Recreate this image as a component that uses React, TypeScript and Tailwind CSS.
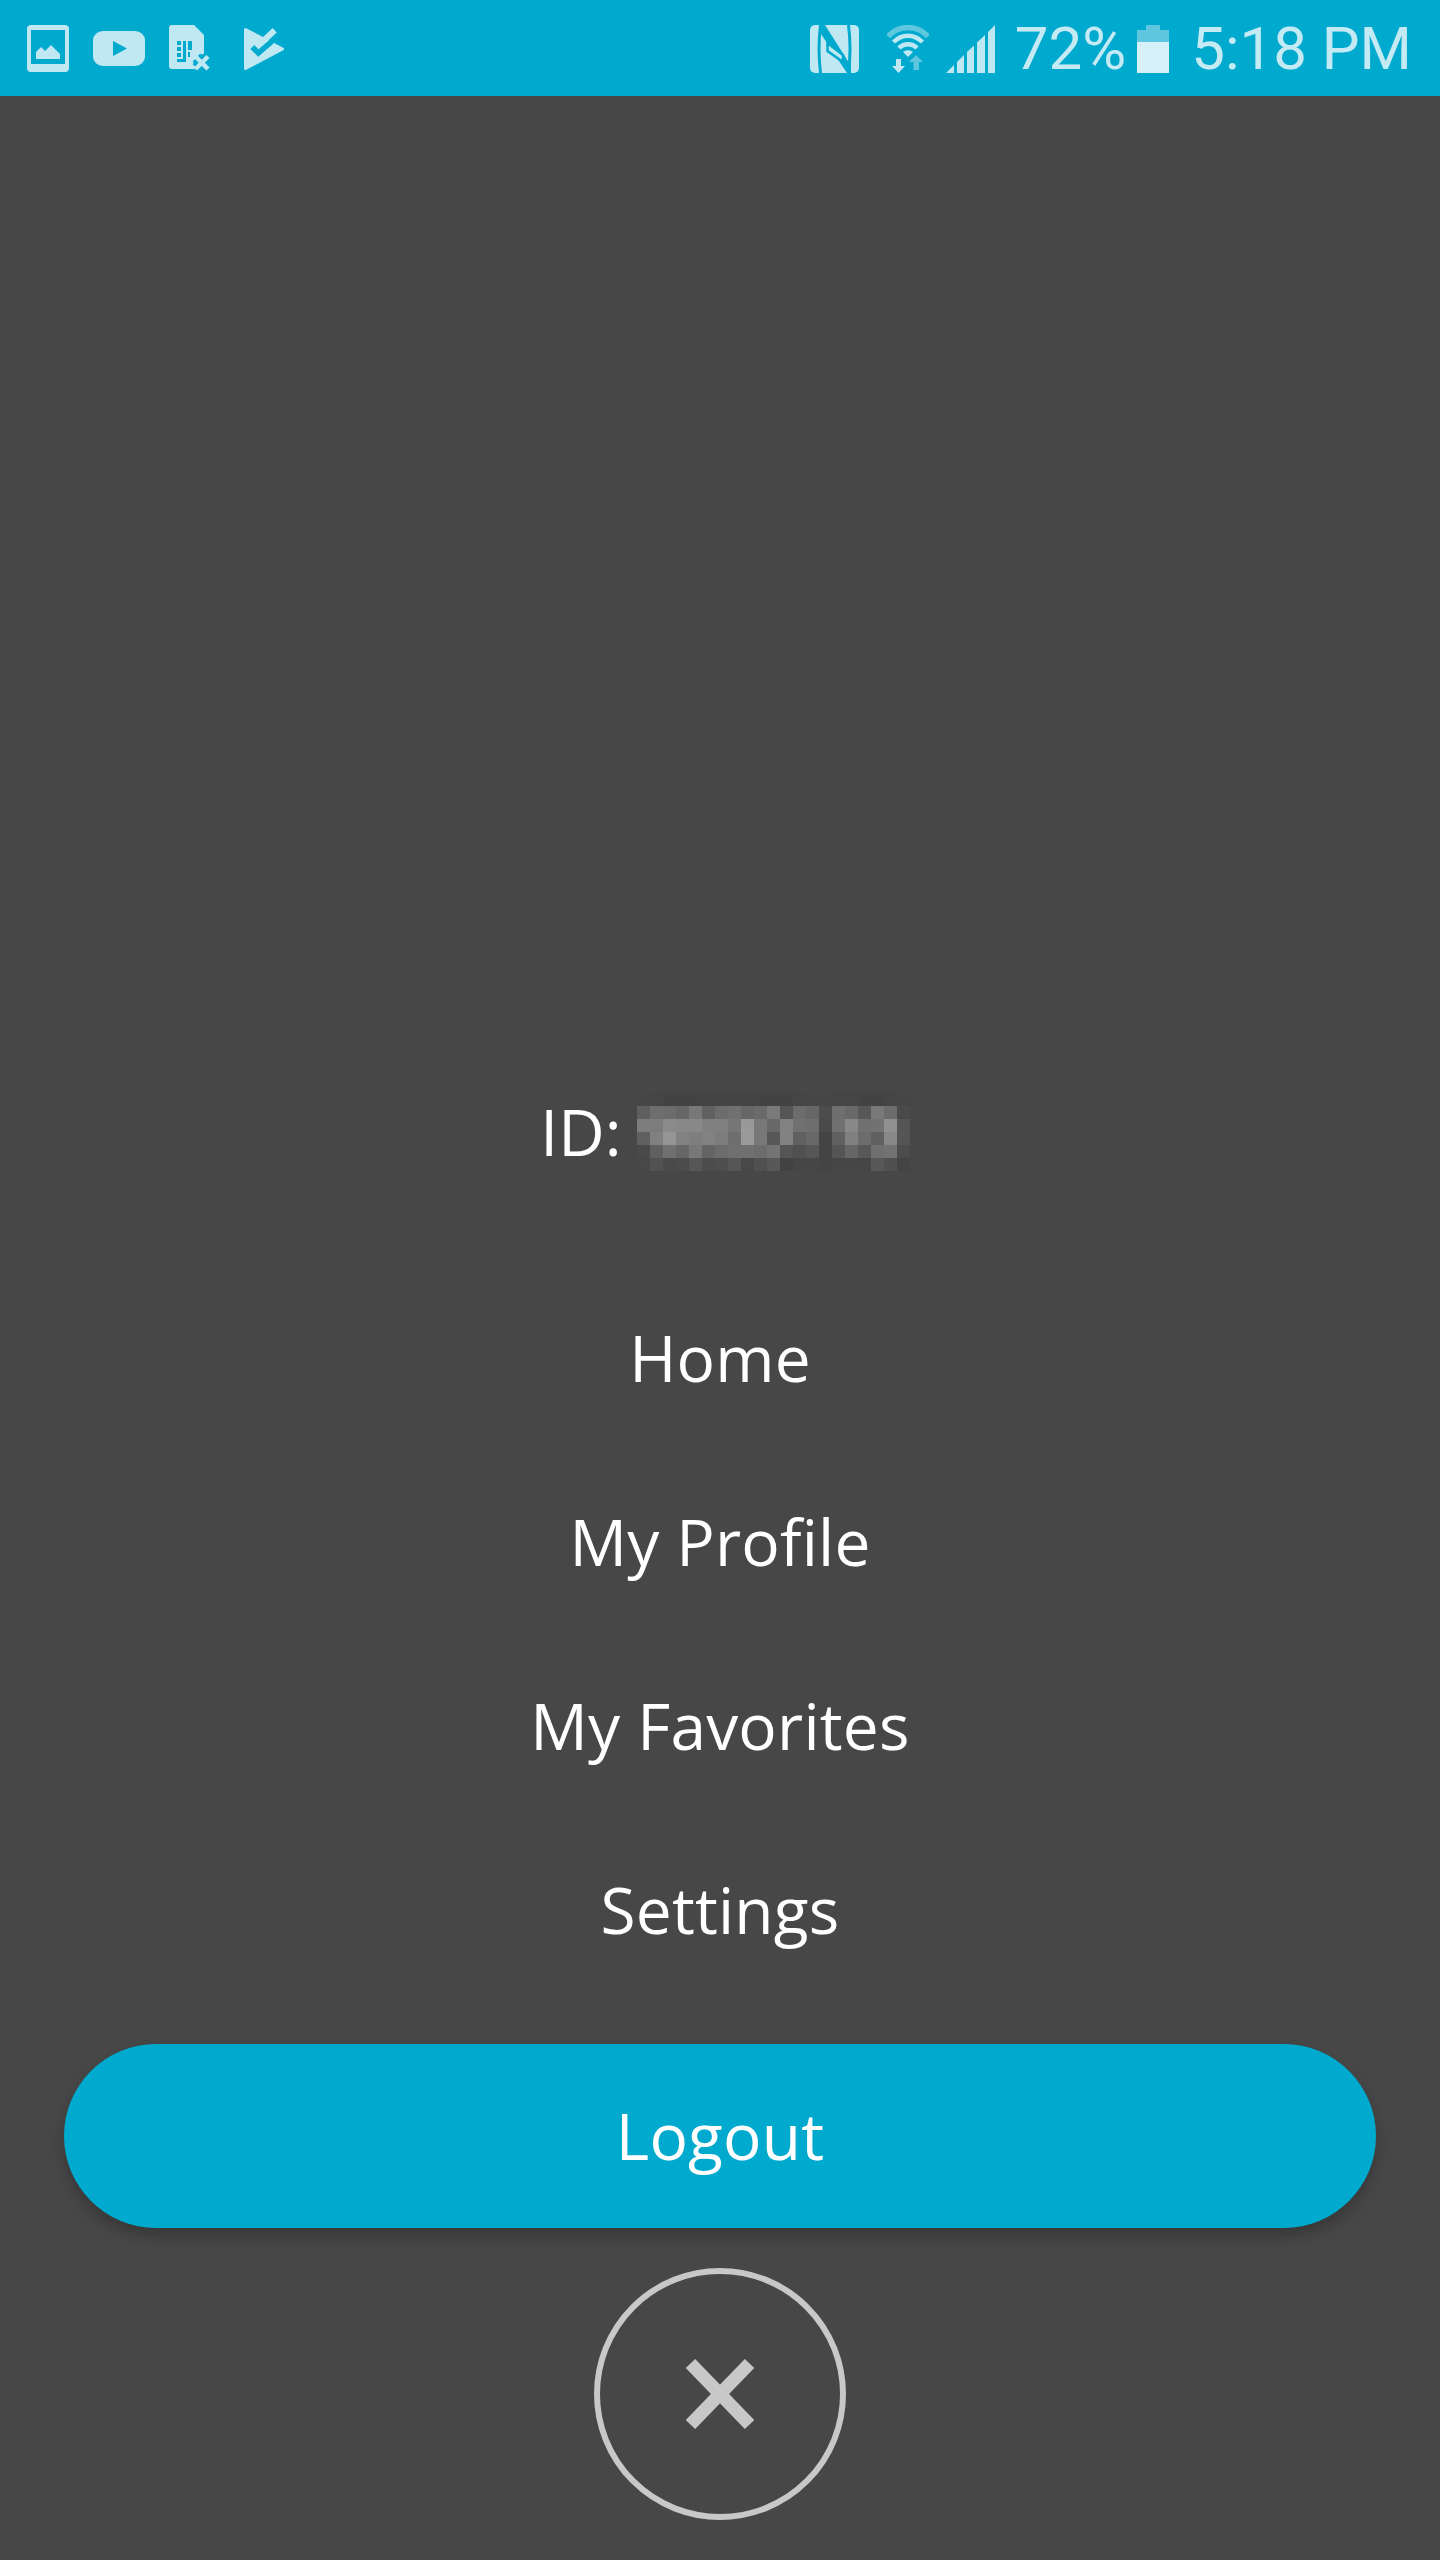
const L = "#bfe8f3";
const T = "#00a9ce";
const D = "#5fc6df";

const mosaic: string[][] = [
  ["46","45","43","43","43","44","44","44","44","43","43","43","45","46","46","45","45","43","43","45","46"],
  ["5f","6e","6c","66","78","60","6c","70","66","6a","7a","55","6c","66","4c","6e","68","58","78","6c","4a"],
  ["7d","7c","8b","88","88","80","80","76","99","78","68","82","70","6e","4a","70","88","70","72","90","55"],
  ["60","80","95","82","7e","82","7c","6e","9a","78","58","82","60","68","44","60","80","6c","60","88","55"],
  ["4a","60","70","66","78","64","6c","70","70","6c","74","55","50","56","44","55","66","58","70","72","4c"],
  ["48","52","4a","4c","56","4c","4e","56","48","50","58","42","46","46","44","46","46","46","58","50","44"],
];

function ImageIcon() {
  return (
    <svg width="42" height="47" viewBox="0 0 42 47" className="ml-px">
      <path fillRule="evenodd" fill={L} d="M4 0H38a4 4 0 0 1 4 4V43a4 4 0 0 1-4 4H4a4 4 0 0 1-4-4V4a4 4 0 0 1 4-4ZM4 5V39H38V5Z" />
      <path fill={L} d="M9 34V27L14 22L18 26L24 20L33 29V34Z" />
    </svg>
  );
}

function YoutubeIcon() {
  return (
    <svg width="52" height="36" viewBox="0 0 52 36">
      <path fillRule="evenodd" fill={L} d="M10 0H42a10 9 0 0 1 10 9V26a10 9 0 0 1-10 9H10a10 9 0 0 1-10-9V9a10 9 0 0 1 10-9ZM20 10V25L34 17.5Z" />
    </svg>
  );
}

function SimIcon() {
  return (
    <svg width="42" height="47" viewBox="0 0 42 47">
      <path fill={L} d="M3 0H25L35 10V41a3 3 0 0 1-3 3H3a3 3 0 0 1-3-3V3a3 3 0 0 1 3-3Z" />
      <g fill={T}>
        <rect x="8" y="16" width="4" height="4" />
        <rect x="8" y="22" width="4" height="4" />
        <rect x="8" y="28" width="4" height="4" />
        <rect x="8" y="34" width="9" height="3" />
        <rect x="14" y="16" width="3" height="18" />
        <rect x="19" y="16" width="4" height="9" />
        <rect x="19" y="27" width="2" height="5" />
      </g>
      <path d="M27.5 32.5L38 43M38 32.5L27.5 43" stroke={T} strokeWidth="11" />
      <path d="M26.5 31.5L39 44M39 31.5L26.5 44" stroke={L} strokeWidth="4.5" />
    </svg>
  );
}

function PlayCheckIcon() {
  return (
    <svg width="40" height="42" viewBox="0 0 40 42">
      <path fill={L} stroke={L} strokeWidth="3" strokeLinejoin="round" d="M1.5 1.5L38.5 21L1.5 40.5Z" />
      <path d="M18.3 14L30.7 2.3" fill="none" stroke={L} strokeWidth="6" />
      <path d="M8.3 19L14.3 25L28.3 13" fill="none" stroke={T} strokeWidth="5.5" />
    </svg>
  );
}

function NfcIcon() {
  return (
    <svg width="49" height="48" viewBox="0 0 49 48">
      <rect width="49" height="48" rx="5" fill={L} />
      <path d="M9 0C7 16 7 32 9 48H12C10 32 10 16 12 0Z" fill={T} />
      <path d="M40 0C42 16 42 32 40 48H37C39 32 39 16 37 0Z" fill={T} />
      <path d="M10 0H15L41 41V48H37L11 9Z" fill={T} />
      <path d="M17.5 18V26L33 37V30Z" fill={L} stroke={T} strokeWidth="2.5" />
    </svg>
  );
}

function WifiIcon() {
  return (
    <svg width="42" height="48" viewBox="0 0 42 48">
      <path d="M1 11.5C12 -0.5 30 -0.5 41 11.5" fill="none" stroke={D} strokeWidth="5.5" />
      <path d="M6.5 17C15 8.5 27 8.5 35.5 17" fill="none" stroke={L} strokeWidth="4.5" />
      <path d="M12 23C17 18 25 18 30 23" fill="none" stroke={L} strokeWidth="4.5" />
      <path d="M16 27C19 24.5 23 24.5 26 27L21 32Z" fill={L} />
      <path fill={L} d="M9 34H14V41H18L11.5 48L5 41H9Z" />
      <path fill={D} d="M26.5 45H32V37H36L29 30L22 37H26.5Z" />
    </svg>
  );
}

function SignalIcon() {
  return (
    <svg width="49" height="48" viewBox="0 0 49 48" fill={L}>
      <polygon points="0,48 8,40 8,48" />
      <polygon points="11,37 18,30 18,48 11,48" />
      <polygon points="21,27 28,20.5 28,48 21,48" />
      <polygon points="31,17.6 39,10 39,48 31,48" />
      <polygon points="42,7 49,0 49,48 42,48" />
    </svg>
  );
}

function BatteryIcon() {
  return (
    <svg width="32" height="48" viewBox="0 0 32 48">
      <path fill={D} d="M9 0H23V5H32V17H0V5H9Z" />
      <rect y="17" width="32" height="31" fill="#d6f1f8" />
    </svg>
  );
}

function CloseIcon() {
  return (
    <svg width="68" height="70" viewBox="0 0 68 70">
      <path d="M4.5 4.5L63.5 65.5M63.5 4.5L4.5 65.5" stroke="#c8c8c8" strokeWidth="13" />
    </svg>
  );
}

function Censored() {
  return (
    <svg width="273" height="78" viewBox="0 0 273 78" shapeRendering="crispEdges">
      {mosaic.map((row, r) =>
        row.map((c, i) => <rect key={`${r}-${i}`} x={i * 13} y={r * 13} width="13" height="13" fill={`#${c}${c}${c}`} />)
      )}
    </svg>
  );
}

const items = ["Home", "My Profile", "My Favorites", "Settings"];

export default function App() {
  return (
    <div className="flex h-[2560px] w-[1440px] flex-col bg-[#474747] font-['Open_Sans',sans-serif] text-white">
      <header className="flex h-[96px] items-center justify-between bg-[#00a9ce] pl-[26px] pr-[28px] pt-[1px]">
        <div className="flex items-center">
          <ImageIcon />
          <div className="ml-[24px]"><YoutubeIcon /></div>
          <div className="ml-[24px]"><SimIcon /></div>
          <div className="ml-[33px]"><PlayCheckIcon /></div>
        </div>
        <div className="flex items-center font-['Roboto',sans-serif] text-[60px] font-normal leading-none text-[#c4eaf4]">
          <NfcIcon />
          <div className="ml-[28px]"><WifiIcon /></div>
          <div className="ml-[17px]"><SignalIcon /></div>
          <span className="ml-[20px]">72%</span>
          <div className="ml-[11px]"><BatteryIcon /></div>
          <span className="ml-[22px]">5:18 PM</span>
        </div>
      </header>
      <main className="flex flex-1 flex-col items-center justify-end pb-[40px] text-[64px] tracking-[0.2px]">
        <div className="mb-[42px] flex h-[184px] items-center pl-[10px]">
          <span>ID:</span>
          <div className="ml-[15px]"><Censored /></div>
        </div>
        {items.map((t) => (
          <div key={t} className="flex h-[184px] items-center justify-center">{t}</div>
        ))}
        <button className="mt-[42px] flex h-[184px] w-[1312px] items-center justify-center rounded-full bg-[#00a9ce] text-white shadow-[0_8px_14px_rgba(0,0,0,0.22)]">
          Logout
        </button>
        <button className="mt-[40px] flex h-[252px] w-[252px] items-center justify-center rounded-full border-[6px] border-[#c8c8c8]">
          <CloseIcon />
        </button>
      </main>
    </div>
  );
}
